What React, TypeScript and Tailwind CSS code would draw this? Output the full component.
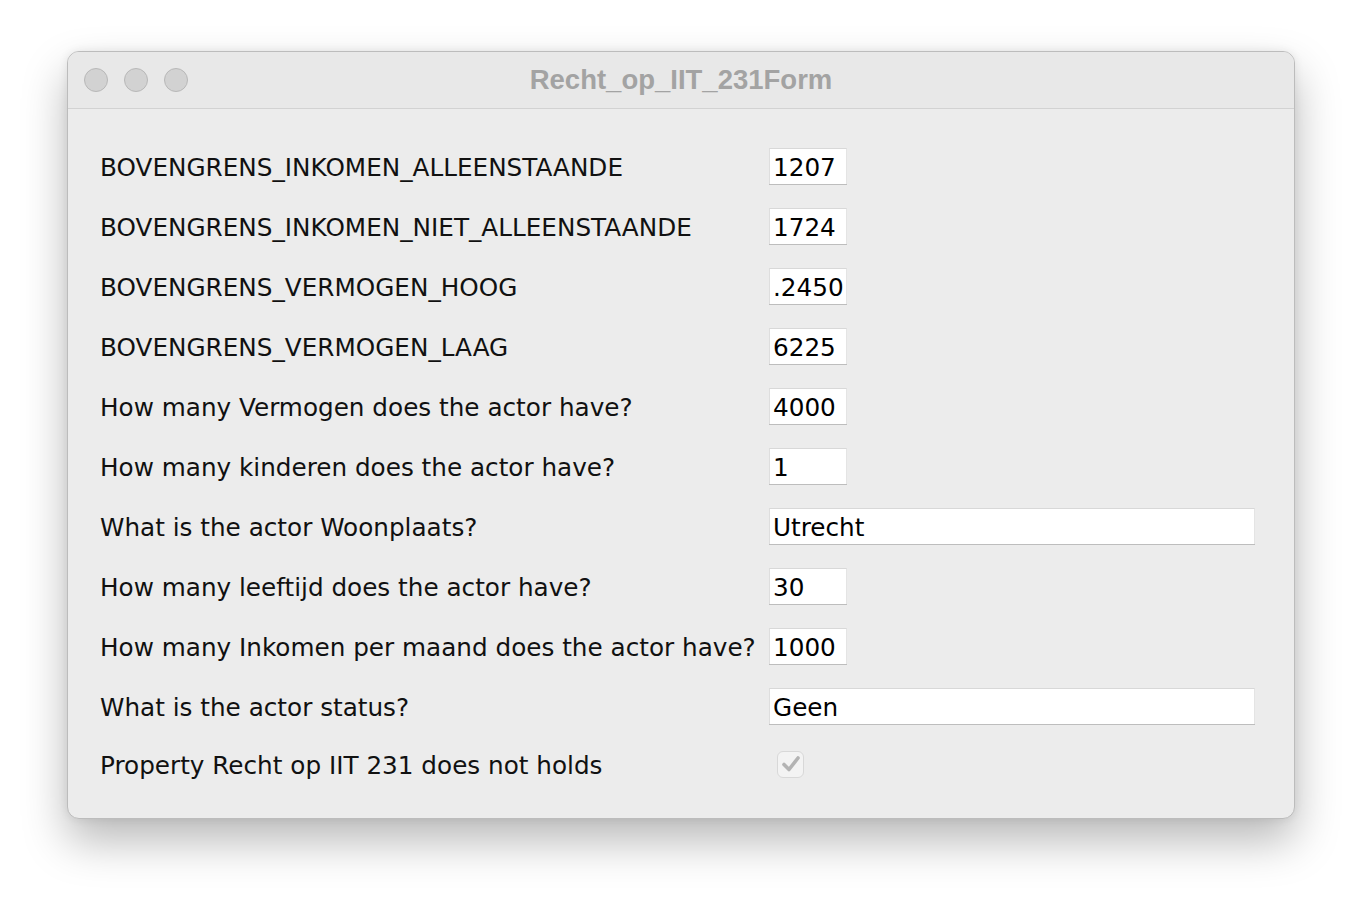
import React from "react";

type Row = { label: string; value?: string; wide?: boolean; check?: boolean };

const rows: Row[] = [
  { label: "BOVENGRENS_INKOMEN_ALLEENSTAANDE", value: "1207" },
  { label: "BOVENGRENS_INKOMEN_NIET_ALLEENSTAANDE", value: "1724" },
  { label: "BOVENGRENS_VERMOGEN_HOOG", value: ".2450" },
  { label: "BOVENGRENS_VERMOGEN_LAAG", value: "6225" },
  { label: "How many Vermogen does the actor have?", value: "4000" },
  { label: "How many kinderen does the actor have?", value: "1" },
  { label: "What is the actor Woonplaats?", value: "Utrecht", wide: true },
  { label: "How many leeftijd does the actor have?", value: "30" },
  { label: "How many Inkomen per maand does the actor have?", value: "1000" },
  { label: "What is the actor status?", value: "Geen", wide: true },
];

function Field({ value, wide }: { value: string; wide?: boolean }) {
  return (
    <div
      className={`h-[36px] ${wide ? "w-[486px]" : "w-[78px]"} bg-white border-t border-l border-r border-t-[#d8d8d8] border-l-[#dedede] border-r-[#e4e4e4] shadow-[0_1px_0_#bdbdbd] flex items-center pl-[3px] pt-[3px] overflow-hidden whitespace-nowrap text-black`}
    >
      {value}
    </div>
  );
}

export default function App() {
  return (
    <div className="min-h-[902px] w-[1362px] bg-white pt-[51px] pl-[67px]">
      <div
        className="w-[1228px] h-[768px] rounded-[12px] border border-[#bcbcbc] bg-[#ececec] overflow-hidden shadow-[0_22px_45px_rgba(0,0,0,0.28),0_0_10px_rgba(0,0,0,0.08)] flex flex-col"
        style={{ fontFamily: '"DejaVu Sans", sans-serif' }}
      >
        <div className="relative h-[57px] shrink-0 bg-[#e8e8e8] border-b border-[#d2d2d2] flex items-center pl-[16px] gap-[16px]">
          <div className="w-[24px] h-[24px] rounded-full bg-[#d2d2d2] border border-[#b8b8b8]" />
          <div className="w-[24px] h-[24px] rounded-full bg-[#d2d2d2] border border-[#b8b8b8]" />
          <div className="w-[24px] h-[24px] rounded-full bg-[#d2d2d2] border border-[#b8b8b8]" />
          <div
            className="absolute inset-0 flex items-center justify-center text-[27.5px] font-bold text-[#a3a3a3] pointer-events-none"
            style={{ fontFamily: '"Liberation Sans", Arial, sans-serif' }}
          >
            Recht_op_IIT_231Form
          </div>
        </div>
        <div className="flex-1 pt-[39px] pl-[32px] flex flex-col gap-[24px] text-[24.7px] text-[#111]">
          {rows.map((r) => (
            <div key={r.label} className="flex items-center h-[36px]">
              <div className="w-[669px] whitespace-nowrap pt-[3px]">{r.label}</div>
              <Field value={r.value ?? ""} wide={r.wide} />
            </div>
          ))}
          <div className="flex items-center h-[32px]">
            <div className="w-[669px] whitespace-nowrap pt-[3px]">Property Recht op IIT 231 does not holds</div>
            <div className="ml-[8px] w-[27px] h-[27px] rounded-[6px] border border-[#d8d8d8] bg-[#f3f3f3] flex items-center justify-center">
              <svg width="20" height="18" viewBox="0 0 20 18">
                <path d="M3 9.5 L8 14.5 L17 3" fill="none" stroke="#b3b3b3" strokeWidth="3.6" strokeLinecap="round" strokeLinejoin="round" />
              </svg>
            </div>
          </div>
        </div>
      </div>
    </div>
  );
}
